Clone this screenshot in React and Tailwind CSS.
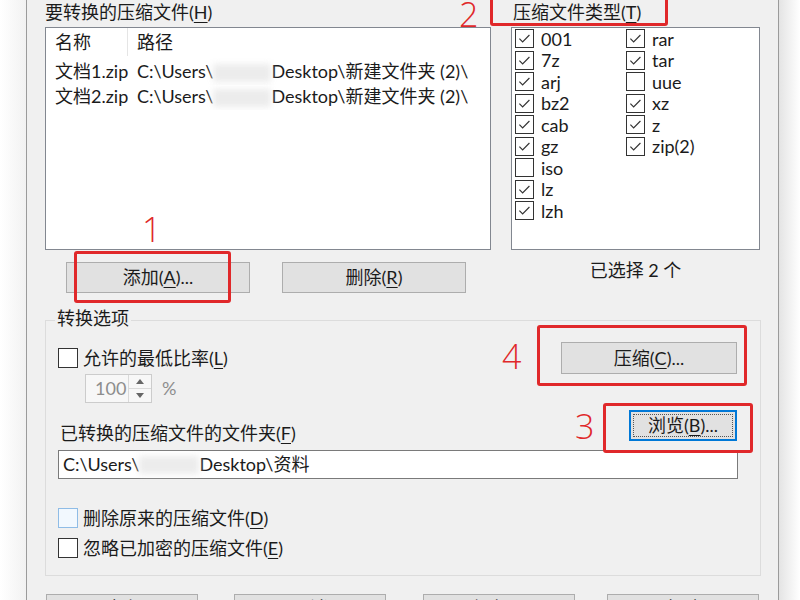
import React from "react";

const redBox = "absolute border-[3px] border-[#e0282a] rounded-[3px]";
const redNum =
  "absolute leading-none text-[34px] font-light text-[#e0282a] font-['Open_Sans',sans-serif]";

function Box({ checked, hover, big }) {
  const size = big ? "w-[20px] h-[20px]" : "w-[19px] h-[19px]";
  const look = hover
    ? "border-[#8fbce6] bg-[#f2f8fe]"
    : "border-[#333333] bg-white";
  return (
    <span className={`${size} ${look} shrink-0 border flex items-center justify-center`}>
      {checked && (
        <svg viewBox="0 0 19 19" className="w-full h-full">
          <path
            d="M3.8 9.6 L7.4 13.2 L15 5.6"
            fill="none"
            stroke="#333333"
            strokeWidth="1.3"
          />
        </svg>
      )}
    </span>
  );
}

function Btn({ className = "", children }) {
  return (
    <div
      className={`flex items-center justify-center border border-[#adadad] bg-[#e1e1e1] ${className}`}
    >
      {children}
    </div>
  );
}

function Key({ k }) {
  return (
    <>
      (<span className="underline underline-offset-[3px]">{k}</span>)
    </>
  );
}

function Blur({ w }) {
  return (
    <span
      className={`${w} inline-block h-[18px] align-middle bg-[#ececec] blur-[3px]`}
    />
  );
}

const col1 = [
  ["001", true],
  ["7z", true],
  ["arj", true],
  ["bz2", true],
  ["cab", true],
  ["gz", true],
  ["iso", false],
  ["lz", true],
  ["lzh", true],
];
const col2 = [
  ["rar", true],
  ["tar", true],
  ["uue", false],
  ["xz", true],
  ["z", true],
  ["zip(2)", true],
];

function TypeCol({ items, className = "" }) {
  return (
    <div className={`flex flex-col ${className}`}>
      {items.map(([name, on]) => (
        <div key={name} className="h-[21.5px] flex items-center gap-[7px]">
          <Box checked={on} />
          <span className="leading-[20px]">{name}</span>
        </div>
      ))}
    </div>
  );
}

export default function App() {
  return (
    <div className="relative w-[800px] h-[600px] overflow-hidden flex bg-white text-[18px] text-[#1b1b1b] font-['Lato','Noto_Sans_CJK_SC',sans-serif]">
      <div className="w-[26px] shrink-0 bg-linear-to-r from-white to-[#f2f2f2]" />

      <div className="w-[753px] shrink-0 border-l border-r border-[#9b9b9b] bg-[#f0f0f0] pl-[18px] pr-[17px]">
        {/* top: archives + types */}
        <div className="flex gap-[20px]">
          <div className="w-[446px]">
            <div className="h-[24px] leading-[24px]">
              要转换的压缩文件<Key k="H" />
            </div>
            <div className="mt-[3px] h-[223px] border border-[#828790] bg-white">
              <div className="flex h-[28px]">
                <div className="w-[82px] pl-[9px] flex items-center border-r border-[#e5e5e5]">
                  名称
                </div>
                <div className="pl-[9px] flex items-center">路径</div>
              </div>
              <div className="mt-[3px]">
                {["文档1.zip", "文档2.zip"].map((f) => (
                  <div key={f} className="flex h-[25px] items-center whitespace-nowrap">
                    <div className="w-[82px] pl-[9px]">{f}</div>
                    <div className="pl-[9px] overflow-hidden">
                      C:\Users\<Blur w="w-[58px]" />
                      Desktop\新建文件夹 (2)\
                    </div>
                  </div>
                ))}
              </div>
            </div>
            <div className="mt-[12px] flex gap-[32px] pl-[21px]">
              <Btn className="w-[184px] h-[31px]">
                添加<Key k="A" />...
              </Btn>
              <Btn className="w-[184px] h-[31px]">
                删除<Key k="R" />
              </Btn>
            </div>
          </div>

          <div className="w-[249px]">
            <div className="h-[24px] leading-[24px] pl-[2px]">
              压缩文件类型<Key k="T" />
            </div>
            <div className="mt-[3px] h-[223px] border border-[#828790] bg-white flex pl-[3px]">
              <TypeCol items={col1} className="w-[111px]" />
              <TypeCol items={col2} />
            </div>
            <div className="mt-[8px] h-[24px] leading-[24px] text-center">
              已选择 2 个
            </div>
          </div>
        </div>

        {/* conversion options */}
        <fieldset className="mt-[13px] h-[270px] border border-[#dcdcdc]">
          <legend className="ml-[9px] px-[2px] h-[28px] leading-[24px]">
            转换选项
          </legend>

          <div className="mt-[8px] h-[32px] flex items-center justify-between pl-[12px] pr-[23px]">
            <div className="flex items-center gap-[5px]">
              <Box big />
              <span>
                允许的最低比率<Key k="L" />
              </span>
            </div>
            <Btn className="w-[176px] h-[32px]">
              压缩<Key k="C" />...
            </Btn>
          </div>

          <div className="ml-[39px] h-[29px] flex items-center">
            <div className="w-[67px] h-full flex border border-[#cccccc] bg-[#f7f7f7]">
              <div className="flex-1 flex items-center pl-[9px] text-[#8d8d8d]">100</div>
              <div className="w-[23px] flex flex-col border-l border-[#d9d9d9]">
                <div className="flex-1 flex items-center justify-center border-b border-[#d9d9d9]">
                  <svg viewBox="0 0 8 5" className="w-[8px] h-[5px]">
                    <path d="M0 5 L4 0 L8 5 Z" fill="#666666" />
                  </svg>
                </div>
                <div className="flex-1 flex items-center justify-center">
                  <svg viewBox="0 0 8 5" className="w-[8px] h-[5px]">
                    <path d="M0 0 L4 5 L8 0 Z" fill="#666666" />
                  </svg>
                </div>
              </div>
            </div>
            <span className="ml-[10px] text-[#8d8d8d]">%</span>
          </div>

          <div className="mt-[7px] h-[31px] flex items-end justify-between pl-[14px] pr-[23px]">
            <div className="h-[24px] leading-[24px] mb-[-4px]">
              已转换的压缩文件的文件夹<Key k="F" />
            </div>
            <div className="w-[108px] h-[31px] border-2 border-[#0078d7] bg-[#e1e1e1] p-[2px]">
              <div className="w-full h-full flex items-center justify-center border border-dotted border-[#555555]">
                浏览<Key k="B" />...
              </div>
            </div>
          </div>

          <div className="mt-[9px] ml-[12px] w-[680px] h-[29px] border border-[#7a7a7a] bg-white flex items-center pl-[4px] whitespace-nowrap">
            C:\Users\<Blur w="w-[60px]" />
            Desktop\资料
          </div>

          <div className="mt-[27px] pl-[12px] h-[24px] flex items-center gap-[5px]">
            <Box big hover />
            <span>
              删除原来的压缩文件<Key k="D" />
            </span>
          </div>
          <div className="mt-[6px] pl-[12px] h-[24px] flex items-center gap-[5px]">
            <Box big />
            <span>
              忽略已加密的压缩文件<Key k="E" />
            </span>
          </div>
        </fieldset>

        {/* dialog buttons (cut off) */}
        <div className="mt-[18px] flex">
          <Btn className="ml-[1px] w-[152px] h-[31px] !items-start">确定</Btn>
          <Btn className="ml-[36px] w-[152px] h-[31px] !items-start">取消</Btn>
          <Btn className="ml-[37px] w-[152px] h-[31px] !items-start">
            保存<Key k="S" />
          </Btn>
          <Btn className="ml-[32px] w-[152px] h-[31px] !items-start">帮助</Btn>
        </div>
      </div>

      <div className="flex-1 bg-linear-to-r from-[#e4e4e4] to-white" />

      {/* annotations */}
      <div className={`${redBox} left-[74px] top-[251px] w-[157px] h-[52px]`} />
      <div className={`${redBox} left-[490px] top-[-4px] w-[178px] h-[30px]`} />
      <div className={`${redBox} left-[537px] top-[325px] w-[210px] h-[61px]`} />
      <div className={`${redBox} left-[603px] top-[403px] w-[150px] h-[50px]`} />
      <div className={`${redNum} left-[142px] top-[212px]`}>1</div>
      <div className={`${redNum} left-[459px] top-[-3px]`}>2</div>
      <div className={`${redNum} left-[575px] top-[409px]`}>3</div>
      <div className={`${redNum} left-[502px] top-[339px]`}>4</div>
    </div>
  );
}
